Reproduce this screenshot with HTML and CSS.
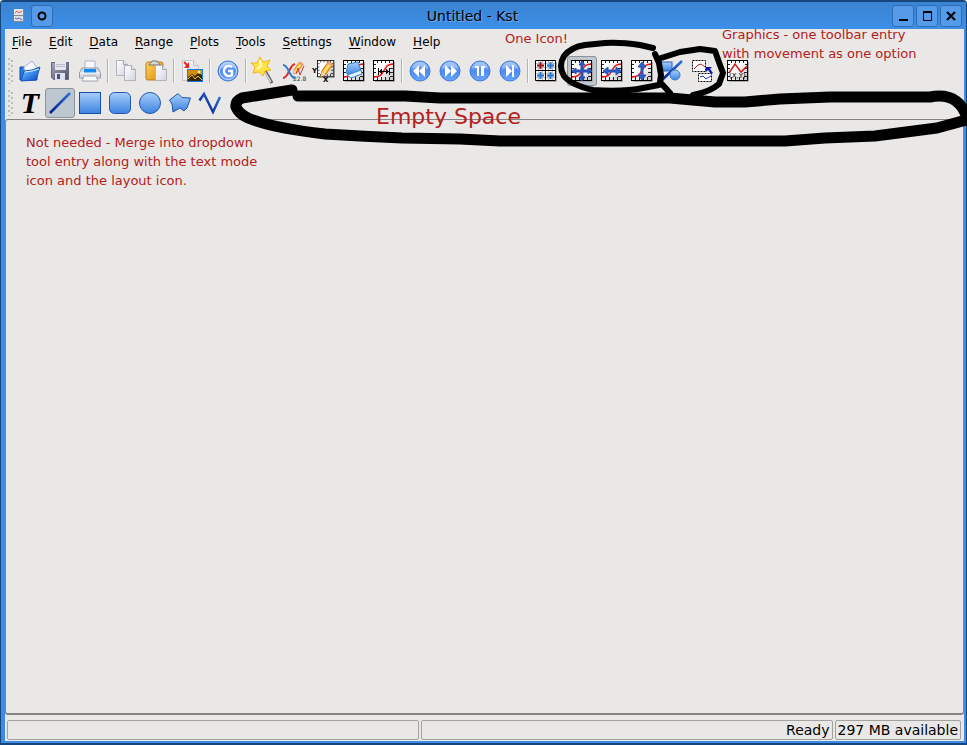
FILE: index.html
```html
<!DOCTYPE html>
<html lang="en">
<head>
<meta charset="utf-8">
<title>Untitled - Kst</title>
<link rel="stylesheet" href="styles.css">
</head>
<body>
<svg class="defs" aria-hidden="true">
  <defs>
    <linearGradient id="blue" x1="0" y1="0" x2="0" y2="1"><stop offset="0" stop-color="#a9cffb"/><stop offset="1" stop-color="#3c83e0"/></linearGradient>
    <linearGradient id="ball" x1="0" y1="0" x2="0" y2="1"><stop offset="0" stop-color="#8db8fa"/><stop offset=".5" stop-color="#4d8af2"/><stop offset="1" stop-color="#69a6ff"/></linearGradient>
    <linearGradient id="ink" x1="1" y1="0" x2="0" y2="1"><stop offset="0" stop-color="#2e73d8"/><stop offset="1" stop-color="#06188c"/></linearGradient>
    <linearGradient id="paper" x1="0" y1="0" x2="1" y2="1"><stop offset=".4" stop-color="#fff"/><stop offset="1" stop-color="#c4c4c8"/></linearGradient>
    <linearGradient id="page" x1="0" y1="0" x2="1" y2="1"><stop offset="0" stop-color="#fff"/><stop offset="1" stop-color="#d4d4e2"/></linearGradient>
    <linearGradient id="folder" x1="0" y1="0" x2="1" y2="1"><stop offset="0" stop-color="#9ed4ff"/><stop offset=".5" stop-color="#3a8bee"/><stop offset="1" stop-color="#0a3fb4"/></linearGradient>
    <linearGradient id="steel" x1="0" y1="0" x2="1" y2="1"><stop offset="0" stop-color="#a4a7bd"/><stop offset="1" stop-color="#4c4f68"/></linearGradient>
    <linearGradient id="gold" x1="0" y1="0" x2="1" y2="1"><stop offset="0" stop-color="#ffd65c"/><stop offset="1" stop-color="#d98a0c"/></linearGradient>
    <symbol id="plot" viewBox="0 0 22 22">
      <path d="M2 21.500H21.500V2" fill="none" stroke="#aaa"/>
      <rect x=".5" y=".5" width="20" height="20" fill="url(#paper)" stroke="#000"/>
      <path d="M4.500 1v2M8.500 1v2M12.500 1v2M16.500 1v2M4.500 20v-3M8.500 20v-3M12.500 20v-3M16.500 20v-3M1 4.500h2M1 8.500h2M1 12.500h2M1 16.500h2M20 4.500h-2M20 8.500h-3M20 12.500h-3M20 16.500h-3" stroke="#222"/>
    </symbol>
    <symbol id="curve" viewBox="0 0 22 22"><path d="M1 17C9 17 9 13 12 9 14 5 16 4.500 20 4" fill="none" stroke="#f01414" stroke-width="1.500"/></symbol>
    <symbol id="disc" viewBox="0 0 22 22"><circle cx="11" cy="11" r="10" fill="url(#ball)" stroke="#4279d8"/><path d="M3 9a8 7 0 0 1 16 0Q11 4 3 9" fill="#b8d2fc" opacity=".6"/></symbol>
    <symbol id="sheet" viewBox="0 0 12 16"><path d="M.5.500h7l4 4v11H.500z" fill="url(#page)" stroke="#b2b2bc"/><path d="M7.500.500v4h4" fill="#e5e5ef" stroke="#a5a5b2"/></symbol>
    <symbol id="pencil" viewBox="0 0 16 18"><path d="M10 1l5 3-8 11-5 2 1-6z" fill="#ffb62e" stroke="#c6781b"/><path d="M12 3L5 13" stroke="#ffe28a" stroke-width="2"/><path d="M2 17l1-5 4 3z" fill="#f4d7b0"/><path d="M10 1l5 3-1.500 2-5-3z" fill="#f0a080"/></symbol>
  </defs>
</svg>

<div class="window">
  <header class="titlebar">
    <svg class="app-icon" width="10" height="13" viewBox="0 0 10 13"><rect width="10" height="13" fill="#888"/><rect width="9" height="6" fill="#e4e4e4"/><rect y="7" width="9" height="5" fill="#dedede"/><path d="M1 4l2-2 2 2 3-2" fill="none" stroke="#e55"/><path d="M1 9l2 1 2-1 3 2" fill="none" stroke="#66c"/></svg>
    <button class="frame-button" aria-label="Sticky"><svg width="20" height="20"><circle cx="10" cy="10" r="3.500" fill="none" stroke="#000" stroke-width="2"/></svg></button>
    <h1 class="title">Untitled - Kst</h1>
    <div class="frame-buttons">
      <button class="frame-button" aria-label="Minimize"><svg width="20" height="20"><path d="M6 14h9" stroke="#000" stroke-width="2"/></svg></button>
      <button class="frame-button" aria-label="Maximize"><svg width="20" height="20"><path d="M6.500 6v8.500h8V6" fill="none" stroke="#000"/><path d="M6 6h9" stroke="#000" stroke-width="2"/></svg></button>
      <button class="frame-button" aria-label="Close"><svg width="20" height="20"><path d="M6 6l8 8M14 6l-8 8" stroke="#000" stroke-width="2"/></svg></button>
    </div>
  </header>

  <nav class="menubar">
    <button><u>F</u>ile</button><button><u>E</u>dit</button><button><u>D</u>ata</button><button><u>R</u>ange</button><button><u>P</u>lots</button><button><u>T</u>ools</button><button><u>S</u>ettings</button><button><u>W</u>indow</button><button><u>H</u>elp</button>
  </nav>

  <div class="toolbar">
    <span class="grip"></span>
    <button class="tool" aria-label="Open"><svg viewBox="0 0 22 22"><path d="M1 7h6l2 3h9v10H1z" fill="#257be0" stroke="#1246a8"/><path d="M5 7l8-6 6 8-4 6H6z" fill="#f5f8ff" stroke="#a8b2d8"/><path d="M5 11l8-1 8-3-4 13-15 1z" fill="url(#folder)" stroke="#1754bd"/><path d="M6 12l7-1 7-2" stroke="#d7efff" fill="none"/></svg></button>
    <button class="tool" aria-label="Save"><svg viewBox="0 0 22 22"><path d="M2.500 2.500h17v17h-15l-2-2z" fill="url(#steel)" stroke="#656981"/><rect x="6" y="2" width="11" height="8" fill="#e5e6ef"/><path d="M7 4.500h9M7 6.500h9" stroke="#bbbccb"/><rect x="6" y="13" width="10" height="7" fill="#dfe0ed"/><rect x="8" y="14" width="3" height="5" fill="#4c506b"/></svg></button>
    <button class="tool" aria-label="Print"><svg viewBox="0 0 22 22"><path d="M6 10V1h10v9" fill="#f8f9ff" stroke="#afb2c2"/><path d="M3 8h16l2.500 5v5h-21v-5z" fill="#d8d9e3" stroke="#9598a5"/><path d="M5 9h12v4H5z" fill="#168af0"/><path d="M1 13h20" stroke="#fff"/><path d="M5 16h12l2 5H3z" fill="#f8f8ff" stroke="#a4a5ae"/></svg></button>
    <span class="separator"></span>
    <button class="tool" aria-label="Copy"><svg viewBox="0 0 22 22"><use href="#sheet" x="1" y="0" width="12" height="16"/><use href="#sheet" x="9" y="5" width="12" height="16"/></svg></button>
    <button class="tool" aria-label="Paste"><svg viewBox="0 0 22 22"><rect x="1" y="2" width="17" height="18" rx="2" fill="url(#gold)" stroke="#b87c1c"/><path d="M4 5c0-2 3-2 3-4h5c0 2 3 2 3 4z" fill="#d8d8da" stroke="#77736a"/><use href="#sheet" x="10" y="5" width="12" height="16"/></svg></button>
    <span class="separator"></span>
    <button class="tool" aria-label="Export image"><svg viewBox="0 0 22 22"><path d="M1.500.500h11l5 5v15h-16z" fill="url(#page)" stroke="#c4c4ca"/><path d="M12.500.500v5h5" fill="#e5e5ef" stroke="#c4c4ca"/><path d="M3 2l4 4" stroke="#e22" stroke-width="2"/><path d="M8 2v6H3z" fill="#e22"/><rect x="6.500" y="9.500" width="15" height="12" fill="#382607" stroke="#167be8"/><path d="M7 10h14v5l-4-2-3 3-3-2-4 3z" fill="#d28c12"/><path d="M7 19l4-4 3 4 3-3 4 4" fill="none" stroke="#f5bf45"/><circle cx="18" cy="12" r="1.500" fill="#fff385"/></svg></button>
    <span class="separator"></span>
    <button class="tool" aria-label="Reload"><svg viewBox="0 0 22 22"><use href="#disc"/><circle cx="11" cy="11" r="8.500" fill="none" stroke="#c5dbff"/><path d="M15 7a5 5 0 1 0 0 8v-4h-4" fill="none" stroke="#fff" stroke-width="2.500"/></svg></button>
    <span class="separator"></span>
    <button class="tool" aria-label="Data wizard"><svg viewBox="0 0 22 22"><path d="M11 9l8 14" stroke="#555" stroke-width="3"/><path d="M10 9l8 13" stroke="#d8d8d8" stroke-width="1.500"/><path d="M7-3l3 5 7-2-3 6 4 4-6 1-2 5-4-4-6 1 2-6-4-4 6 0z" fill="#ffe246" stroke="#eeb621"/><path d="M7 0l1 6-4 3" fill="none" stroke="#fffbd0" stroke-width="2"/></svg></button>
    <button class="tool" aria-label="Data manager"><svg viewBox="0 0 22 22"><path d="M0 18c6 0 6-13 12-14" fill="none" stroke="#e32727" stroke-width="2"/><path d="M0 5c6 0 6 13 12 13" fill="none" stroke="#2a7bd1" stroke-width="2"/><use href="#pencil" x="9" y="0" width="12" height="16"/><path d="M13 14l2-6 2 7 4-9" fill="none" stroke="#c43b2f"/><text x="10" y="21" font-family="DejaVu Sans" font-size="6" fill="#333">22.8</text></svg></button>
    <button class="tool" aria-label="Edit plots"><svg viewBox="0 0 22 22"><use href="#plot" x="4" y="0" width="18" height="18"/><text x="-1" y="13" font-family="DejaVu Sans" font-weight="bold" font-size="7">Y</text><use href="#pencil" x="6" y="0" width="15" height="18"/><text x="10" y="22" font-family="DejaVu Sans" font-weight="bold" font-size="7">X</text></svg></button>
    <button class="tool" aria-label="Change data"><svg viewBox="0 0 22 22"><use href="#plot"/><use href="#curve"/><path d="M5 4l10-2 3 9-11 4-4-2z" fill="url(#blue)" stroke="#3980cb"/><path d="M7 14l11-4 1 4-11 4-4-3z" fill="#dff1ff" stroke="#3980cb"/></svg></button>
    <button class="tool" aria-label="Change samples"><svg viewBox="0 0 22 22"><use href="#plot"/><use href="#curve"/><path d="M5 11.500h12M5.500 8v7M16.500 8v7" stroke="#000"/><path d="M6 11.500l3-3v6zM16 11.500l-3-3v6z"/></svg></button>
    <span class="separator"></span>
    <button class="tool" aria-label="Back"><svg viewBox="0 0 22 22"><use href="#disc"/><path d="M10 5v12l-6-6zM16 5v12l-6-6z" fill="#fff"/></svg></button>
    <button class="tool" aria-label="Forward"><svg viewBox="0 0 22 22"><use href="#disc"/><path d="M6 5v12l6-6zM12 5v12l6-6z" fill="#fff"/></svg></button>
    <button class="tool" aria-label="Pause"><svg viewBox="0 0 22 22"><use href="#disc"/><path d="M6 6h4v10H8V8H6zM12 6h4v2h-1v8h-3z" fill="#fff"/></svg></button>
    <button class="tool" aria-label="Read to end"><svg viewBox="0 0 22 22"><use href="#disc"/><path d="M7 5v12l6-6zM13 5h2v12h-2z" fill="#fff"/></svg></button>
    <span class="separator"></span>
    <button class="tool" aria-label="Tied zoom"><svg viewBox="0 0 22 22"><path d="M.500.500h20v20H.500z" fill="#f6f6f6" stroke="#000"/><path d="M3.500 1v19M7.500 1v19M13.500 1v19M17.500 1v19M1 3.500h19M1 7.500h19M1 13.500h19M1 17.500h19" stroke="#b9bcc2"/><path d="M10.500 0v21M0 10.500h21" stroke="#000"/><path d="M5.500 2v7M2 5.500h7" stroke="#a01414" stroke-width="2"/><path d="M15.500 2v7M12 5.500h7M5.500 12v7M2 15.500h7M15.500 12v7M12 15.500h7" stroke="#2376d5" stroke-width="2"/><path d="M21.500 2v19.500H2" fill="none" stroke="#aaa"/></svg></button>
    <span class="separator blank"></span>
    <button class="tool pressed" aria-label="XY zoom"><svg viewBox="0 0 22 22"><use href="#plot"/><use href="#curve"/><path d="M11 1l3 4h-2v5h5V8l4 3-4 3v-2h-5v5h2l-3 4-3-4h2v-5H5v2l-4-3 4-3v2h5V5H8z" fill="#2856bd" stroke="#2a4fb0"/></svg></button>
    <button class="tool" aria-label="X zoom"><svg viewBox="0 0 22 22"><use href="#plot"/><use href="#curve"/><path d="M2 11l5-4v3h8V7l5 4-5 4v-3H7v3z" fill="#2b60c8" stroke="#2a4fb0"/></svg></button>
    <button class="tool" aria-label="Y zoom"><svg viewBox="0 0 22 22"><use href="#plot"/><use href="#curve"/><path d="M11 2l4 5h-3v8h3l-4 5-4-5h3V7H7z" fill="#2b60c8" stroke="#2a4fb0"/></svg></button>
    <button class="tool" aria-label="Graphics"><svg viewBox="0 0 22 22"><rect x="0" y="2" width="11" height="9" fill="url(#blue)" stroke="#2866c5"/><path d="M1 20L21 1" stroke="url(#ink)" stroke-width="2.500"/><circle cx="14" cy="15" r="5" fill="url(#blue)" stroke="#3978d0"/></svg></button>
    <button class="tool" aria-label="Layout mode"><svg viewBox="0 0 22 22"><rect x="1.500" y=".5" width="13" height="11" fill="#fff" stroke="#000" stroke-dasharray="2 1"/><path d="M3 9l4-4 3-1 4 3" fill="none" stroke="#b32020"/><rect x="7.500" y="13.500" width="13" height="8" fill="#fff" stroke="#000" stroke-dasharray="2 1"/><path d="M9 17l3-1 3 3 5-3" fill="none" stroke="#1c34cc"/><path d="M15 7h6l-2 2 3 4-2 1-3-4-2 2z" fill="#0818ae"/></svg></button>
    <span class="separator blank"></span>
    <button class="tool" aria-label="Coordinates"><svg viewBox="0 0 22 22"><use href="#plot"/><path d="M2 13l6-9 6 8 6-6" fill="none" stroke="#d11a1a" stroke-width="1.500"/><text x="2" y="18" font-family="DejaVu Sans" font-size="7">(X,Y)</text></svg></button>
  </div>

  <div class="toolbar">
    <span class="grip"></span>
    <button class="tool letter" aria-label="Label mode">T</button>
    <button class="tool pressed" aria-label="Line"><svg viewBox="0 0 22 22"><path d="M1 21L21 1" stroke="url(#ink)" stroke-width="2.500"/></svg></button>
    <button class="tool" aria-label="Rectangle"><svg viewBox="0 0 22 22"><rect x=".5" y=".5" width="21" height="21" fill="url(#blue)" stroke="#184ca7"/></svg></button>
    <button class="tool" aria-label="Rounded rectangle"><svg viewBox="0 0 22 22"><rect x=".5" y=".5" width="21" height="21" rx="5" fill="url(#blue)" stroke="#2458b0"/></svg></button>
    <button class="tool" aria-label="Ellipse"><svg viewBox="0 0 22 22"><circle cx="11" cy="11" r="10.500" fill="url(#blue)" stroke="#2458b0"/></svg></button>
    <button class="tool" aria-label="Polygon"><svg viewBox="0 0 22 22"><path d="M.5 8L9 1.500l4 4 8.500.500L18 16l-3 3-4-3-7 4-1-8z" fill="url(#blue)" stroke="#2054ad"/></svg></button>
    <button class="tool" aria-label="Polyline"><svg viewBox="0 0 22 22"><path d="M.5 8.500L5 2l9 18 7-15" fill="none" stroke="url(#ink)" stroke-width="2.500"/></svg></button>
  </div>

  <main class="workspace"></main>

  <footer class="statusbar">
    <span class="cell wide"></span>
    <span class="cell wide">Ready</span>
    <span class="cell">297 MB available</span>
  </footer>
</div>

<div class="markup">
  <svg class="strokes" width="967" height="745" viewBox="0 0 967 745" aria-hidden="true">
    <g fill="none" stroke="#000" stroke-linecap="round" stroke-linejoin="round">
      <path stroke-width="11" d="M292 90L242 98Q235 101 236 107Q239 114 248 118Q272 128 325 134L360 136L402 138L460 139L500 141H785L825 138L875 136L937 128L966 120M298 96L405 96L440 98L670 98L715 102H745L780 99L830 97H930Q946 94 956 101Q964 107 967 118"/>
      <path stroke-width="6" d="M653 48L640 45Q620 42 605 43L585 45Q571 47 564 56Q558 66 564 76Q571 85 593 90Q624 92 643 88L659 85"/>
      <path stroke-width="6" d="M655 54L659 63L661 75L660 82L670 93M658 59L680 52L700 49L715 51L720 65L723 73L719 84Q710 92 693 95"/>
    </g>
  </svg>
  <p class="note one-icon">One Icon!</p>
  <p class="note graphics">Graphics - one toolbar entry<br>with movement as one option</p>
  <p class="note empty">Empty Space</p>
  <p class="note merge">Not needed - Merge into dropdown<br>tool entry along with the text mode<br>icon and the layout icon.</p>
</div>
</body>
</html>
```
FILE: styles.css
```css
* { box-sizing: border-box; }

body {
  margin: 0;
  position: relative;
  overflow: hidden;
  background: #e9e8e6;
  color: #000;
  font: 12px "DejaVu Sans", sans-serif;
}

button {
  border: 0;
  padding: 0;
  background: none;
  color: inherit;
  font: inherit;
}

.defs { position: absolute; width: 0; height: 0; }

.window {
  display: flex;
  flex-direction: column;
  min-height: 100vh;
  border: 1px solid #17467e;
  border-top-width: 2px;
  border-bottom-width: 2px;
  border-radius: 4px 4px 0 0;
  background: #e9e8e6;
  box-shadow: inset 4px 0 #3d8ce6, inset -2px 0 #3d8ce6, inset 0 -2px #3d8ce6;
}

.titlebar {
  display: flex;
  align-items: center;
  height: 27px;
  padding: 0 4px 0 13px;
  background: linear-gradient(#3a83d0, #3c8fe9);
}

.app-icon { margin-right: 7px; }

.frame-buttons { display: flex; gap: 2px; }

.frame-button {
  display: grid;
  place-items: center;
  width: 22px;
  height: 22px;
  border: 1px solid #2d6db6;
  border-radius: 3px;
  background: #559be8;
}

.title {
  flex: 1;
  margin: 0;
  text-align: center;
  font-size: 14px;
  font-weight: normal;
  text-shadow: 1px 1px #68a8ee;
}

.menubar {
  display: flex;
  gap: 17px;
  height: 26px;
  margin: 0 3px 0 4px;
  padding-left: 7px;
}

.menubar u { text-underline-offset: 2px; }

.toolbar {
  display: flex;
  align-items: center;
  height: 32px;
  margin: 0 3px 0 4px;
}

.grip {
  width: 6px;
  height: 26px;
  margin: 0 1px 0 3px;
  background: radial-gradient(circle at 1px 1px, #bdbcba 1px, transparent 1px) 0 0 / 6px 5px,
    radial-gradient(circle at 4px 3px, #bdbcba 1px, transparent 1px) 0 0 / 6px 5px;
}

.tool {
  display: grid;
  place-items: center;
  width: 30px;
  height: 30px;
}

.tool svg { width: 22px; height: 22px; overflow: visible; }

.pressed {
  border: 1px solid #8b949b;
  border-radius: 3px;
  background: #bdc7cf;
}

.letter { font: italic bold 30px/28px "Liberation Serif", serif; }

.separator {
  width: 4px;
  height: 24px;
  margin-left: 2px;
  background: linear-gradient(90deg, #b4b3b1 1px, #f8f8f7 1px, #f8f8f7 2px, transparent 2px);
}

.separator.blank { visibility: hidden; }

.workspace {
  flex: 1;
  margin: 0 2px 0 4px;
  border: 1px solid #858483;
  border-bottom-width: 2px;
  border-radius: 3px;
}

.statusbar {
  display: flex;
  gap: 2px;
  margin: 5px 5px 3px 6px;
  font-size: 14px;
  line-height: 19px;
}

.cell {
  height: 20px;
  padding: 0 2px;
  border: 1px solid #a3a2a0;
  border-radius: 2px;
  text-align: right;
}

.wide { flex: 1; }

.markup {
  position: absolute;
  inset: 0;
  overflow: hidden;
  pointer-events: none;
}

.strokes { display: block; }

.note {
  position: absolute;
  margin: 0;
  color: #b52020;
  font-size: 13px;
  line-height: 19px;
  white-space: nowrap;
}

.one-icon { left: 505px; top: 29px; }
.graphics { left: 722px; top: 25px; }
.empty { left: 376px; top: 104px; font-size: 22px; line-height: 26px; }
.merge { left: 26px; top: 133px; }
```
